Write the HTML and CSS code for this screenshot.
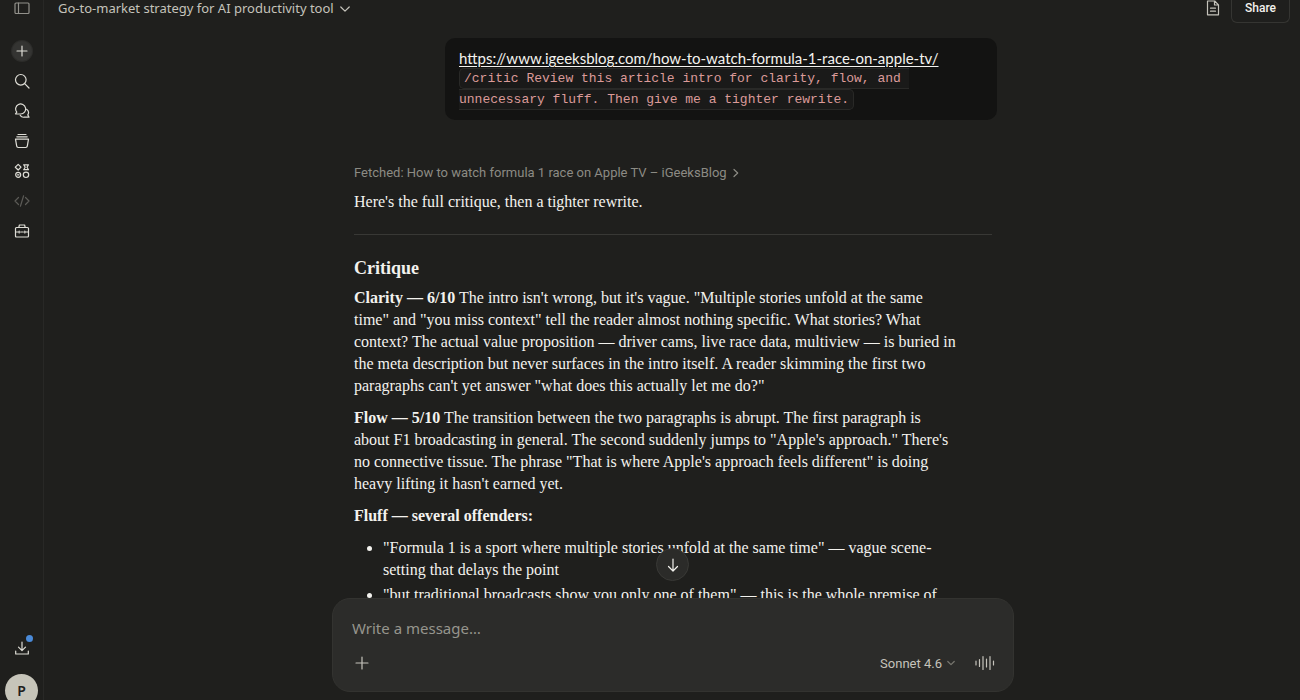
FILE: index.html
```html
<!DOCTYPE html>
<html lang="en">
<head>
  <meta charset="UTF-8" />
  <meta name="viewport" content="width=device-width, initial-scale=1" />
  <title>Go-to-market strategy for AI productivity tool</title>
  <link rel="stylesheet" href="styles.css">
</head>
<body>
  <nav class="sidebar">
    <button class="side-btn toggle" aria-label="Toggle sidebar">
      <svg width="16" height="16" viewBox="0 0 16 16"><rect x="1" y="3" width="14" height="10.5" rx="1" /><path d="M4.5 3v10.5" /></svg>
    </button>
    <button class="side-btn new-chat" aria-label="New chat">
      <svg width="16" height="16" viewBox="0 0 16 16"><path d="M8 3v10M3 8h10" /></svg>
    </button>
    <button class="side-btn" aria-label="Search">
      <svg width="16" height="16" viewBox="0 0 16 16"><circle cx="6.8" cy="6.8" r="5.3" /><path d="M10.7 10.7L15 15" /></svg>
    </button>
    <button class="side-btn" aria-label="Chats">
      <svg width="16" height="16" viewBox="0 0 16 16"><path d="M1.500 10.800L2.800 9.200A5 5 0 1 1 6.600 11z" /><path d="M12.600 6.300a4.200 4.200 0 0 1 1.200 5.600l1.200 2.300H10a4 4 0 0 1-3.800-1.800" /></svg>
    </button>
    <button class="side-btn" aria-label="Projects">
      <svg width="16" height="16" viewBox="0 0 16 16"><path d="M4 1.500h8M2.800 3.800h10.400M1.500 6.200h13l-1.200 7q-.2 1.300-1.500 1.300H4.200q-1.300 0-1.500-1.300z" /></svg>
    </button>
    <button class="side-btn" aria-label="Artifacts">
      <svg width="16" height="16" viewBox="0 0 16 16"><path d="M4.200 1.300L7 4.200 4.200 7 1.300 4.200zM9.700 1.800h4.800L13 4.200l1.500 2.500H9.700l1.500-2.500z" /><circle cx="4.200" cy="11.800" r="2.500" /><circle cx="12" cy="11.800" r="2.700" /><path d="M3.500 11.800h1.500" /></svg>
    </button>
    <button class="side-btn muted" aria-label="Code">
      <svg width="16" height="16" viewBox="0 0 16 16"><path d="M4.500 4.500L1 8l3.500 3.500M11.500 4.500L15 8l-3.500 3.500M9.600 2.800L6.400 13.200" /></svg>
    </button>
    <button class="side-btn" aria-label="Customize">
      <svg width="16" height="16" viewBox="0 0 16 16"><path d="M2.500 4.500h11q1 0 1 1v7.500q0 1-1 1h-11q-1 0-1-1V5.500q0-1 1-1zM4.800 4.500L5.400 2h5.200l.6 2.500M1.500 9h3.700M6.600 9h2.800M10.800 9h3.700M5.200 8v2M10.800 8v2" /></svg>
    </button>

    <button class="side-btn download" aria-label="Download apps">
      <svg width="16" height="16" viewBox="0 0 16 16"><path d="M8 2v8.500M4.500 7.200L8 10.700l3.500-3.500M1.700 11v3h12.600v-3" /></svg>
      <span class="dot"></span>
    </button>
    <button class="avatar">P</button>
  </nav>

  <main class="main">
    <header class="topbar">
      <button class="chat-title">
        Go-to-market strategy for AI productivity tool
        <svg width="10" height="10" viewBox="0 0 10 10"><path d="M.8 3L5 7.200 9.200 3" /></svg>
      </button>
      <div class="topbar-actions">
        <button class="doc-btn" aria-label="Files">
          <svg width="16" height="16" viewBox="0 0 16 16"><path d="M2.500 1h7.200L13.500 4.800v10h-11zM9.500 1v4h4M5.500 8.200h5M5.500 11.200h5" /></svg>
        </button>
        <button class="share-btn">Share</button>
      </div>
    </header>

    <section class="conversation">
      <div class="thread">
        <div class="user-message">
          <a href="https://www.igeeksblog.com/how-to-watch-formula-1-race-on-apple-tv/">https://www.igeeksblog.com/how-to-watch-formula-1-race-on-apple-tv/</a>
          <div class="code-line"><code>/critic Review this article intro for clarity, flow, and&nbsp;<br />unnecessary fluff. Then give me a tighter rewrite.</code></div>
        </div>

        <article class="reply">
          <button class="fetched">
            Fetched: How to watch formula 1 race on Apple TV – iGeeksBlog
            <svg width="8" height="10" viewBox="0 0 8 10"><path d="M2 1.500L5.700 5 2 8.500" /></svg>
          </button>
          <p>Here's the full critique, then a tighter rewrite.</p>
          <hr />
          <h2>Critique</h2>
          <p><strong>Clarity — 6/10</strong> The intro isn't wrong, but it's vague. "Multiple stories unfold at the same<br />time" and "you miss context" tell the reader almost nothing specific. What stories? What<br />context? The actual value proposition — driver cams, live race data, multiview — is buried in<br />the meta description but never surfaces in the intro itself. A reader skimming the first two<br />paragraphs can't yet answer "what does this actually let me do?"</p>
          <p><strong>Flow — 5/10</strong> The transition between the two paragraphs is abrupt. The first paragraph is<br />about F1 broadcasting in general. The second suddenly jumps to "Apple's approach." There's<br />no connective tissue. The phrase "That is where Apple's approach feels different" is doing<br />heavy lifting it hasn't earned yet.</p>
          <p><strong>Fluff — several offenders:</strong></p>
          <ul>
            <li>"Formula 1 is a sport where multiple stories unfold at the same time" — vague scene-<br />setting that delays the point</li>
            <li>"but traditional broadcasts show you only one of them" — this is the whole premise of</li>
          </ul>
        </article>
      </div>
    </section>

    <form class="composer">
      <button type="button" class="scroll-btn" aria-label="Scroll to bottom">
        <svg width="16" height="16" viewBox="0 0 16 16"><path d="M8 2v12M3.500 9.500L8 14l4.500-4.500" /></svg>
      </button>
      <input type="text" class="message-input" placeholder="Write a message…" aria-label="Write a message" />
      <div class="composer-row">
        <button type="button" class="icon-btn" aria-label="Add files">
          <svg width="16" height="16" viewBox="0 0 16 16"><path d="M8 2v12M2 8h12" /></svg>
        </button>
        <button type="button" class="model-btn">
          Sonnet 4.6
          <svg width="8" height="8" viewBox="0 0 8 8"><path d="M.8 2.500L4 5.700l3.200-3.200" /></svg>
        </button>
        <button type="button" class="icon-btn voice" aria-label="Voice mode">
          <svg width="20" height="16" viewBox="0 0 20 16"><path d="M1 6v4M4.500 4.500v7M8 1.500v13M11.500 4v8M15 1.500v13M18.500 6v4" /></svg>
        </button>
      </div>
    </form>
  </main>
</body>
</html>
```

FILE: styles.css
```css
* {
  box-sizing: border-box;
}

body {
  margin: 0;
  height: 100vh;
  display: flex;
  overflow: hidden;
  background-color: #1f1f1d;
  color: #f3f2ee;
  font-family: "Noto Sans", sans-serif;
}

button {
  padding: 0;
  border: none;
  background: none;
  color: inherit;
  font-family: inherit;
  cursor: pointer;
}

svg {
  display: block;
  flex: none;
  fill: none;
  stroke: currentColor;
  stroke-width: 1.2;
  stroke-linecap: round;
  stroke-linejoin: round;
}

/* Sidebar */
.sidebar {
  flex: none;
  width: 44px;
  display: flex;
  flex-direction: column;
  align-items: center;
  gap: 10px;
  border-right: 1px solid #282826;
  color: #deddd6;
}

.side-btn {
  position: relative;
  flex: none;
  width: 20px;
  height: 20px;
  display: flex;
  align-items: center;
  justify-content: center;
  border-radius: 50%;
}

.toggle {
  height: 16px;
  margin-bottom: 15px;
  color: #92918b;
}

.new-chat {
  background-color: #343432;
  box-shadow: 0 0 0 1px #2d2d2b;
}

.muted {
  color: #5c5b57;
}

.download {
  margin-top: auto;
}

.dot {
  position: absolute;
  top: -3px;
  right: -1px;
  width: 7px;
  height: 7px;
  border-radius: 50%;
  background-color: #4a8ad8;
}

.avatar {
  flex: none;
  width: 33px;
  height: 33px;
  margin: 6px 0 -7px;
  border-radius: 50%;
  background-color: #c6c4b9;
  color: #1f1f1d;
  font-size: 14px;
  font-weight: 600;
}

/* Main column */
.main {
  flex: 1;
  min-width: 0;
  display: flex;
  flex-direction: column;
  padding-left: 2px;
}

.topbar {
  flex: none;
  height: 38px;
  display: flex;
  align-items: flex-start;
  justify-content: space-between;
  padding: 0 10px 0 12px;
  color: #c5c3bb;
}

.chat-title {
  display: flex;
  align-items: center;
  gap: 6px;
  font-size: 13px;
  line-height: 17px;
}

.topbar-actions {
  display: flex;
  gap: 10px;
}

.doc-btn {
  height: 16px;
}

.share-btn {
  width: 59px;
  height: 23px;
  padding-bottom: 6px;
  border: 1px solid #353532;
  border-top: none;
  border-radius: 0 0 6px 6px;
  color: #f3f2ee;
  font-family: Roboto, sans-serif;
  font-size: 12px;
  font-weight: 500;
}

.conversation {
  flex: 1;
  min-height: 0;
  overflow: hidden;
}

.thread {
  display: flex;
  flex-direction: column;
  max-width: 648px;
  margin: 0 auto;
}

.user-message {
  align-self: flex-end;
  width: 552px;
  max-width: 100%;
  padding: 10px 14px;
  border-radius: 10px;
  background-color: #131312;
  font-family: Lato, sans-serif;
  font-size: 15px;
  line-height: 20px;
}

.user-message a {
  display: block;
  color: inherit;
  text-underline-offset: 2px;
}

.code-line {
  font-family: "Liberation Mono", monospace;
  font-size: 13px;
  line-height: 21px;
}

.user-message code {
  padding: 2px 4px;
  border: 1px solid #292927;
  border-radius: 5px;
  background-color: #1a1a19;
  color: #dc9b99;
  font: inherit;
}

/* Reply */
.reply {
  padding: 42px 5px 0;
  font-family: "Liberation Serif", serif;
  font-size: 16px;
  line-height: 22px;
}

.reply p {
  margin: 0 0 10px;
  white-space: nowrap;
}

.fetched {
  display: flex;
  align-items: center;
  gap: 5px;
  margin-bottom: 7px;
  color: #8c8b84;
  font-family: Roboto, sans-serif;
  font-size: 13px;
  line-height: 22px;
}

.reply hr {
  margin: 21px 0;
  border: none;
  border-top: 1px solid #383835;
}

.reply h2 {
  margin: 0 0 7px;
  font-size: 18px;
  line-height: 24px;
}

.reply ul {
  margin: 0;
  padding-left: 29px;
}

.reply li {
  margin-bottom: 3px;
  white-space: nowrap;
}

/* Composer */
.composer {
  position: relative;
  flex: none;
  width: 682px;
  max-width: 100%;
  margin: 0 auto 8px;
  padding: 18px 18px 18px 19px;
  border: 1px solid #333330;
  border-radius: 18px;
  background-color: #2c2c2a;
}

.scroll-btn {
  position: absolute;
  top: -51px;
  left: calc(50% - 17px);
  width: 33px;
  height: 33px;
  display: flex;
  align-items: center;
  justify-content: center;
  border: 1px solid #393936;
  border-radius: 50%;
  background-color: #2b2b29;
}

.message-input {
  display: block;
  width: 100%;
  height: 22px;
  padding: 0;
  border: none;
  outline: none;
  background: none;
  color: #f3f2ee;
  font-family: inherit;
  font-size: 15px;
}

.message-input::placeholder {
  color: #96958d;
  opacity: 1;
}

.composer-row {
  display: flex;
  align-items: center;
  margin-top: 14px;
  height: 20px;
  color: #c5c3bb;
}

.icon-btn {
  width: 20px;
  display: flex;
  justify-content: center;
}

.model-btn {
  display: flex;
  align-items: center;
  gap: 5px;
  margin-left: auto;
  font-family: Roboto, sans-serif;
  font-size: 13px;
}

.model-btn svg {
  color: #77766f;
}

.voice {
  margin-left: 20px;
}
```
